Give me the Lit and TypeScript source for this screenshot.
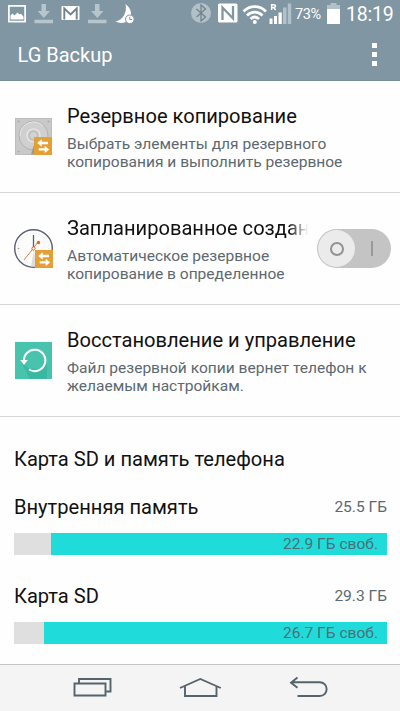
import { LitElement, html, css, svg } from "lit";
import { customElement } from "lit/decorators.js";

const swap = svg`<rect x="22" y="22" width="18" height="18" fill="#e5a035"/>
  <path d="M25.200 28l4.500-3.700v2.500h6.300v2.400h-6.300v2.500zM37.200 34.500l-4.500-3.700v2.400h-6v2.400h6v2.500z" fill="#fff"/>`;

const diskIcon = html`<svg class="icon" width="40" height="40" viewBox="0 0 40 40">
  <rect x="2" y="2" width="37" height="37" fill="#c9c9c9"/>
  <rect x="2.5" y="2.5" width="36" height="36" fill="none" stroke="#bdbdbd"/>
  <circle cx="20.5" cy="19.5" r="14.500" fill="#d0d0d0" stroke="#b2b2b2"/>
  <path d="M7 19.500a13.500 13.500 0 0 1 23-9.500" fill="none" stroke="#e6e6e6" stroke-width="1"/>
  <circle cx="20.500" cy="19.500" r="6.500" fill="#c8c8c8" stroke="#ececec" stroke-width="1.200"/>
  <circle cx="20.500" cy="19.500" r="4" fill="#d3d3d3" stroke="#bbb"/>
  <path d="M18 38.500l4-13v13z" fill="#999"/>
  <g fill="#aaa"><circle cx="5.500" cy="5.500" r="1"/><circle cx="35.500" cy="5.500" r="1"/><circle cx="5.500" cy="35.500" r="1"/></g>
  <g transform="translate(-1 -1)">${swap}</g></svg>`;

const clockIcon = html`<svg class="icon" width="40" height="40" viewBox="0 0 40 40">
  <circle cx="20.500" cy="20.500" r="18.800" fill="#fcfcfc" stroke="#5b6070" stroke-width="1.400"/>
  <circle cx="20.500" cy="20.500" r="15.500" fill="none" stroke="#e2e2e2" stroke-width="1" stroke-dasharray="1 2"/>
  <path d="M21 22l2 16.500h-5z" fill="#ddd"/>
  <path d="M20.500 7v13" stroke="#5b6070" stroke-width="1.300"/>
  <path d="M11 32l9.500-12 4.500-6" stroke="#e08045" stroke-width="1" fill="none"/>
  <circle cx="25.500" cy="14.500" r="1.700" fill="#e66420"/>
  <circle cx="20.500" cy="20.500" r="1.600" fill="#fff" stroke="#e66420"/>
  <circle cx="5.500" cy="20.500" r=".8" fill="#999"/>
  ${swap}</svg>`;

const restoreIcon = html`<svg class="icon" width="40" height="40" viewBox="0 0 40 40">
  <rect x="2" y="2" width="37" height="37" fill="#48c4ae"/>
  <path d="M8 22l9 17h17V24l-3-2-3 6-10 2z" fill="#3bb8a1"/>
  <path d="M11 21.500a10.700 10.700 0 1 1 5 8" fill="none" stroke="#fff" stroke-width="2"/>
  <path d="M7.200 20h7.600L11 25z" fill="#fff"/></svg>`;

const noticeIcons = html`<svg width="140" height="29" viewBox="0 0 140 29">
  <rect x="8.900" y="5.900" width="16.200" height="15.700" fill="none" stroke="#fff" stroke-width="1.700"/>
  <path d="M10.500 19.500v-4l2-2 2 2 3-3 2 2 1.500-.7 2.500 3v2.700z" fill="#fff"/>
  <g fill="#b7c5cc"><path d="M41.500 4h4.500v7h4l-6.200 7-6.200-7h3.900zM34.500 19.700h18.500v3.600H34.500z"/>
  <path d="M95 4h4.500v7h4l-6.200 7-6.200-7H95zM88 19.700h18.500v3.600H88z"/></g>
  <rect x="61.500" y="6" width="18" height="14" rx=".8" fill="#fff"/>
  <path d="M64.300 19.500v-11l6.200 6 6.200-6v11" fill="none" stroke="#70838e" stroke-width="1.900"/>
  <path d="M125.500 4C131 8 133 15 129 19.500 125 24 119 23.500 115.500 21.500 122.500 20 127.500 13 125.500 4z" fill="#fff"/>
  <circle cx="129.800" cy="19.300" r="4.300" fill="#fff" stroke="#8196a3" stroke-width="1"/>
  <path d="M129.800 16.700v2.800h2.300" fill="none" stroke="#8196a3"/></svg>`;

const radioIcons = html`<svg width="102" height="29" viewBox="190 0 102 29">
  <circle cx="201" cy="13" r="10" fill="#b2c0c8"/>
  <path d="M196.500 9l9 8-4.500 4V5l4.500 4-9 8" fill="none" stroke="#71848f" stroke-width="1.300"/>
  <rect x="218" y="3.500" width="19.500" height="19" rx="1.500" fill="#fff"/>
  <path d="M222.500 20V7.500l10.500 11V6" fill="none" stroke="#8196a3" stroke-width="2.300"/>
  <g fill="none" stroke="#fff" stroke-width="2.700"><path d="M243.500 11.500c6.500-6.500 16-6.500 22.500 0M247 15.500c4.500-4.500 11-4.500 15.500 0M250.500 19c2.700-2.500 6-2.500 8.500 0"/></g>
  <circle cx="254.800" cy="22" r="2" fill="#fff"/>
  <path d="M271.600 10V4.700h1.900q2 0 2 1.400t-2 1.400h-2m2 0 2.200 2.500" fill="none" stroke="#fff" stroke-width="1.500"/>
  <path d="M269.500 18.500h3V24h-3zM274 16h3v8h-3zM278.500 12.500h3.300V24h-3.300z" fill="#fff"/>
  <path d="M283 7.500h3.500V24H283zM287.800 3.500h3.400V24h-3.400z" fill="#b2c0c8"/></svg>`;

const batteryIcon = html`<svg class="batt" width="13" height="29" viewBox="0 0 13 29">
  <path d="M3.500 3h6v2H13v5H0V5h3.500z" fill="#b2c0c8"/><path d="M0 9h13v15H0z" fill="#fff"/></svg>`;

@customElement("app-root")
export class AppRoot extends LitElement {
  static styles = css`
    :host { display: flex; flex-direction: column; width: 400px; height: 711px; overflow: hidden;
      background: #fefefe; font-family: Roboto, "Noto Sans", sans-serif; color: #111; box-sizing: border-box; }
    svg { display: block; flex: none; }
    header { background: #8196a3; height: 80px; flex: none; color: #fff; border-bottom: 1px solid #778b97; }
    .status { display: flex; height: 29px; align-items: center; }
    .radio { margin-left: 50px; }
    .pct { font-size: 14.5px; width: 27px; margin-left: 3px; letter-spacing: -.35px; white-space: nowrap; }
    .batt { margin-left: 5px; }
    .time { font-size: 19.5px; margin-left: 6px; letter-spacing: -.2px; }
    .bar { display: flex; height: 51px; align-items: center; justify-content: space-between; padding: 0 23.5px 0 17.5px; }
    .title { font-size: 20px; font-weight: 400; line-height: 24px; }
    .menu { display: grid; gap: 4px; }
    .menu i { width: 5px; height: 5px; background: #fff; }
    .row { height: 111px; flex: none; border-bottom: 1px solid #d6d6d6; display: flex; align-items: center; padding: 0 9px 0 13px; }
    .icon { margin-bottom: 2px; }
    .text { flex: 1; min-width: 0; margin-left: 14px; padding-top: 2px; }
    .name { font-size: 20.1px; line-height: 24px; white-space: nowrap; }
    .fade { -webkit-mask-image: linear-gradient(90deg, #000 222px, transparent 241px); mask-image: linear-gradient(90deg, #000 222px, transparent 241px); }
    .desc { font-size: 15.55px; line-height: 18px; margin-top: 7px; color: #5d6970; white-space: nowrap; }
    .toggle { width: 74px; height: 39px; border-radius: 20px; background: #c4c4c4; display: flex; align-items: center; box-sizing: border-box; padding: 1px; flex: none; }
    .knob { width: 37px; height: 37px; border-radius: 50%; background: #ebebeb; display: grid; place-items: center; }
    .ring { width: 10px; height: 10px; border: 2px solid #929292; border-radius: 50%; }
    .on { width: 2px; height: 15px; background: #999; margin-left: 16px; }
    .storage { flex: 1; padding: 0 13px 0 14px; }
    .head { font-size: 20.1px; line-height: 24px; margin-top: 30px; }
    .line { display: flex; justify-content: space-between; align-items: center; height: 24px; font-size: 20.1px; margin-top: 24px; }
    .size { font-size: 15.55px; color: #5d6970; }
    .meter { height: 22px; margin-top: 14px; background: #dfdfdf; display: flex; justify-content: flex-end; }
    .free { background: #1fdcdb; color: #4c6f76; font-size: 15.55px; line-height: 22px; text-align: right; padding-right: 9px; box-sizing: border-box; }
    .meter + .line { margin-top: 29px; }
    nav { height: 47px; flex: none; box-sizing: border-box; border-top: 1px solid #c2c4c6; background: #f4f4f4; display: flex; justify-content: center; }
  `;

  private row(icon: unknown, name: string, a: string, b: string, toggle = false) {
    return html`<section class="row">${icon}
      <div class="text"><div class="name ${toggle ? "fade" : ""}">${name}</div>
      <div class="desc">${a}<br>${b}</div></div>
      ${toggle ? html`<div class="toggle"><div class="knob"><div class="ring"></div></div><div class="on"></div></div>` : ""}
    </section>`;
  }

  private volume(name: string, size: string, free: string, width: number) {
    return html`<div class="line"><span>${name}</span><span class="size">${size}</span></div>
      <div class="meter"><div class="free" style="width:${width}px">${free}</div></div>`;
  }

  render() {
    return html`
      <header>
        <div class="status">${noticeIcons}<div class="radio">${radioIcons}</div>
          <span class="pct">73%</span>${batteryIcon}<span class="time">18:19</span></div>
        <div class="bar"><span class="title">LG Backup</span><div class="menu"><i></i><i></i><i></i></div></div>
      </header>
      ${this.row(diskIcon, "Резервное копирование", "Выбрать элементы для резервного", "копирования и выполнить резервное")}
      ${this.row(clockIcon, "Запланированное создан", "Автоматическое резервное", "копирование в определенное", true)}
      ${this.row(restoreIcon, "Восстановление и управление", "Файл резервной копии вернет телефон к", "желаемым настройкам.")}
      <section class="storage">
        <div class="head">Карта SD и память телефона</div>
        ${this.volume("Внутренняя память", "25.5 ГБ", "22.9 ГБ своб.", 336)}
        ${this.volume("Карта SD", "29.3 ГБ", "26.7 ГБ своб.", 343)}
      </section>
      <nav><svg width="300" height="46" viewBox="50 665 300 46" fill="none" stroke="#55636d" stroke-width="1.900">
        <path d="M74.500 683.500h31v12h-31zM79 683v-4h31.500v12.500h-4"/>
        <path d="M180 688l20.300-9 20.500 9M185 686.500v9.500h31.500v-9.500"/>
        <path d="M297.500 677.500l-6.500 5.300 6.500 5M291.500 682.300h28c9.500 0 9.500 13.700 0 13.700h-22"/>
      </svg></nav>`;
  }
}
